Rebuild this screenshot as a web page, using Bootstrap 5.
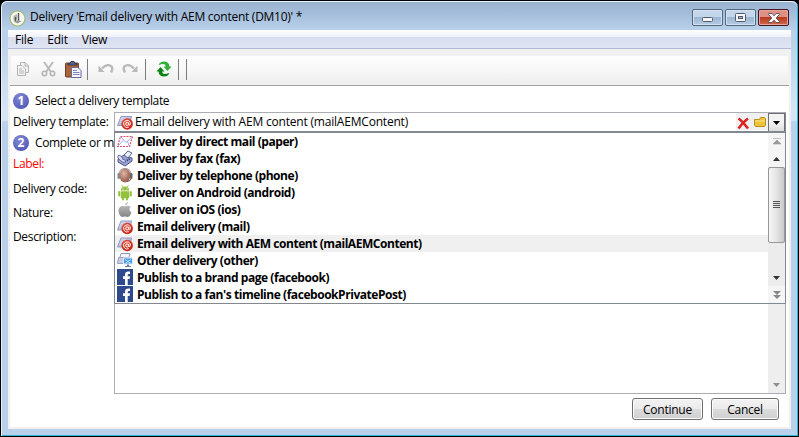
<!DOCTYPE html>
<html lang="en">
<head>
<meta charset="utf-8">
<title>Delivery</title>
<link href="https://cdn.jsdelivr.net/npm/bootstrap@5.3.0/dist/css/bootstrap.min.css" rel="stylesheet">
<style>
html,body{height:100%;margin:0;overflow:hidden;background:#000}
body{font:12px/16px "Open Sans","Noto Sans",sans-serif;color:#000;letter-spacing:-.34px}
svg{display:block;flex:none}
.win{width:799px;height:437px;background:linear-gradient(#b9d1ea 36px,#d5e5f6 110px,#d5e5f6 119px,#b9d1ea 121px);border:1px solid #000;border-radius:7px 7px 0 0;box-shadow:inset 1px 1px 0 #e6f1fb,inset -1px -1px 0 #2cb4d6;padding:0 7px 7px}
.titlebar{height:29px;margin:0 -6px;padding:0 8px 0 7px;background:linear-gradient(#99b3d0,#a5bedb 45%,#b9d1ea);border-radius:6px 6px 0 0;border-top:1px solid #e6f1fb}
.wintitle{letter-spacing:-.26px;padding-top:2px;margin-left:4px}
.captions{gap:2px;padding-top:3px}
.caption{width:31px;height:17px;border:1px solid #53687f;border-radius:2px;box-shadow:inset 0 0 0 1px #d2e2f2;background:linear-gradient(#c3d6ea 48%,#9bb6d2 50%,#b4cde6)}
.caption.shut{border-color:#431422;box-shadow:inset 0 0 0 1px #e5a79d;background:linear-gradient(#dd9184 48%,#b93a20 50%,#d0694c)}
.menus{height:19px;background:linear-gradient(#fff,#eef1f8 38%,#d8deef 40%,#dfe4f3);border-bottom:1px solid #b3bbd4;padding:2px 0 0 7px;gap:14px;letter-spacing:-.2px}
.client{height:380px;background:#f0f0f0;padding:7px 2px 2px}
.tools{height:26px;margin:0 1px;background:linear-gradient(#fdfdfd,#f8f8f8 45%,#efefef)}
.rule{width:1px;height:21px;background:#7d7d7d}
.pane{height:342px;margin-top:3px;background:#fff;border-top:1px solid #a0a0a0}
.stepnum{width:16px;height:16px;border-radius:50%;color:#fff;font-weight:700;line-height:16px;letter-spacing:0;background:radial-gradient(circle at 40% 30%,#8289d4,#5a62bd 65%,#434aa5)}
.labels{width:104px;padding-left:3px;overflow:hidden;white-space:nowrap}
.field{height:24px}
.combo{width:672px;height:20px;border:1px solid #abadb3;border-right-color:#828790;border-bottom:0}
.chosen{letter-spacing:-.2px;margin-left:2px;padding-top:1px}
.tool{width:15px;height:17px;background:#f0f0f0}
.drop{width:17px;height:19px;border:1px solid #707070;background:linear-gradient(#f3f3f3 50%,#dcdcdc)}
.memo{width:672px;height:262px;border:1px solid #abadb3;background:#fff}
.memobar{width:17px;height:260px;background:#eee;padding-bottom:6px}
.popup{left:0;top:-1px;width:672px;height:173px;border:1px solid #828790;border-top-width:2px;background:#fff}
.item{height:17px;line-height:17px;padding-left:2px;gap:4px;font-weight:700;white-space:nowrap;letter-spacing:-.45px}
.item.cur{background:#f0f0f0}
.bar{width:17px;background:#ececec}
.pgbtn{height:17px;background:#f5f5f5}
.thumb{height:76px;border:1px solid #979797;border-radius:2px;background:linear-gradient(90deg,#f6f6f6,#e4e4e4 50%,#c9c9c9)}
.push{height:22px;border:1px solid #707070;border-radius:3px;box-shadow:inset 0 0 0 1px #fcfcfc;background:linear-gradient(#f3f3f3,#ebebeb 48%,#dcdcdc 50%,#cfcfcf);line-height:19px;padding:0;letter-spacing:-.25px}
</style>
<script src="https://cdn.jsdelivr.net/npm/bootstrap@5.3.0/dist/js/bootstrap.bundle.min.js"></script>
</head>
<body>
<svg width="0" height="0" class="position-absolute">
<defs>
<linearGradient id="env" x2="1" y2="1"><stop stop-color="#eef0fb"/><stop offset="1" stop-color="#8d92bd"/></linearGradient>
<radialGradient id="red" cx=".4" cy=".35"><stop stop-color="#ee6a54"/><stop offset="1" stop-color="#cf2616"/></radialGradient>
<symbol id="mail" viewBox="0 0 16 16"><path d="M4 2.500h10.500l-2 9H.5z" fill="url(#env)" stroke="#9297bb"/><path d="M4 3l5 4.500L14 3" fill="none" stroke="#b9bddb" stroke-width=".8"/><circle cx="10.200" cy="10" r="5.700" fill="url(#red)"/><circle cx="10.200" cy="10" r="1.500" fill="none" stroke="#fff"/><path d="M11.800 8.300v2.300q.3 1 1.200.5.900-1.200.3-2.900a3.600 3.600 0 1 0-1.400 4.900" fill="none" stroke="#fff" stroke-width=".9"/></symbol>
<symbol id="fb" viewBox="0 0 16 16"><path d="M0 0h16v16H0z" fill="#2f4a8c"/><path d="M8 16v-6H6V7.200h2V5.500Q8 2.500 11.500 2.500H13V5h-1.300q-1 0-1 1v1.200H13l-.4 2.800h-1.900v6z" fill="#fff"/></symbol>
</defs></svg>
<div class="win">
 <div class="titlebar d-flex align-items-center">
  <svg width="17" height="17" viewBox="0 0 17 17" class="mt-1"><circle cx="8.500" cy="8.500" r="7.500" fill="#f6f7f3" stroke="#a3bb6d" stroke-width="1.200"/><path d="M8 4L4.500 6v5L8 9.500z" fill="#b2b2b2"/><path d="M9.500 3v8M6.500 7v4" stroke="#555" stroke-width="1.400"/><path d="M4.500 11.500l4 2 4-2.200-3-1z" fill="#999"/></svg>
  <span class="wintitle">Delivery 'Email delivery with AEM content (DM10)' *</span>
  <div class="captions d-flex ms-auto">
   <div class="caption d-flex align-items-center justify-content-center"><svg width="11" height="5" class="mt-1"><rect x=".5" y=".5" width="10" height="4" rx="1" fill="#f6f6f6" stroke="#525a6b"/></svg></div>
   <div class="caption d-flex align-items-center justify-content-center"><svg width="11" height="9"><rect x=".5" y=".5" width="10" height="8" rx="1" fill="#f6f6f6" stroke="#525a6b"/><rect x="3.500" y="3.500" width="4" height="2" fill="#a5bcd6" stroke="#525a6b"/></svg></div>
   <div class="caption shut d-flex align-items-center justify-content-center"><svg width="12" height="10" viewBox="0 0 12 10"><path d="M.6.500h3.300L6 2.800 8.100.500h3.300v1L8.200 5l3.200 3.500v1H8.100L6 7.200 3.900 9.500H.6v-1L3.800 5 .6 1.500z" fill="#fff" stroke="#584a58" stroke-width=".9"/></svg></div>
  </div>
 </div>
 <div class="menus d-flex"><span>File</span><span>Edit</span><span>View</span></div>
 <div class="client">
  <div class="tools d-flex align-items-center">
   <svg width="14" height="16" viewBox="0 0 14 16" style="margin-left:5px"><path d="M4.500 1.500H9L12.500 5v6.500h-8z" fill="#f4f4f4" stroke="#b4b4b4"/><path d="M1.500 4.500H6L9.500 8v6.500h-8z" fill="#f4f4f4" stroke="#b4b4b4"/><path d="M3 8h3m-3 2h5m-5 2h5M9 1.500V5h3.500" fill="none" stroke="#b4b4b4"/></svg>
   <svg width="15" height="16" viewBox="0 0 15 16" style="margin-left:11px"><path d="M3 1l7 10M12 1L5 11" stroke="#b9b9b9" stroke-width="2"/><circle cx="3.500" cy="12.500" r="2.200" fill="none" stroke="#b4b4b4" stroke-width="1.500"/><circle cx="11.500" cy="12.500" r="2.200" fill="none" stroke="#b4b4b4" stroke-width="1.500"/></svg>
   <svg width="17" height="17" viewBox="0 0 17 17" style="margin-left:9px"><rect x=".5" y="2" width="13" height="14" rx="1" fill="#a9643c" stroke="#6f3c22"/><path d="M3 4V2.500h2L6 .5h3l1 2h2V4z" fill="#596487" stroke="#343b57"/><path d="M6.500 6.500H13l3 3v7H6.500z" fill="#f4f6ff" stroke="#676c9c"/><path d="M8 9.500h4m-4 2h6.500m-6.500 2h6.500" stroke="#8188b7"/></svg>
   <div class="rule" style="margin-left:5px"></div>
   <svg width="16" height="12" viewBox="0 0 16 12" style="margin-left:10px"><path d="M4 5.500Q8 1 12 2.500t1 7" fill="none" stroke="#b9b9b9" stroke-width="2.400"/><path d="M.5 2.500V9h6z" fill="#b9b9b9"/></svg>
   <svg width="16" height="12" viewBox="0 0 16 12" style="margin-left:8px"><path d="M12 5.500Q8 1 4 2.500t-1 7" fill="none" stroke="#b9b9b9" stroke-width="2.400"/><path d="M15.500 2.500V9h-6z" fill="#b9b9b9"/></svg>
   <div class="rule" style="margin-left:7px"></div>
   <svg width="16" height="16" viewBox="0 0 16 16" style="margin-left:10px"><path d="M2.500 4Q4 .5 8 .5q5 0 5.500 5h2l-4 4.500-4-4.500H10Q9.500 3 7.500 3T2.500 4z" fill="#2fb037"/><path d="M13.500 12q-1.500 3.500-5.500 3.500-5 0-5.500-5h-2l4-4.500 4 4.500H6q.5 2.500 2.500 2.500t5-1z" fill="#0c8416"/></svg>
   <div class="rule" style="margin-left:6px"></div><div class="rule" style="margin-left:7px"></div>
  </div>
  <div class="pane">
   <div class="d-flex align-items-center" style="height:26px;padding:4px 0 0 3px"><span class="stepnum text-center">1</span><span style="margin-left:6px">Select a delivery template</span></div>
   <div class="d-flex">
    <div class="labels" style="padding-top:2px">Delivery template:</div>
    <div class="combo d-flex"><svg width="16" height="16" style="margin:1px 0 0 2px"><use href="#mail"/></svg><span class="chosen">Email delivery with AEM content (mailAEMContent)</span>
     <div class="tool ms-auto d-flex align-items-center justify-content-center"><svg width="13" height="13" viewBox="0 0 13 13" class="mt-1"><path d="M1.500 1.500Q5 4 11 11.500M11 1.500Q6 5 1.500 11.500" fill="none" stroke="#dc2323" stroke-width="2.600"/></svg></div>
     <div class="tool d-flex align-items-center justify-content-center" style="width:17px"><svg width="12" height="10" viewBox="0 0 12 10"><path d="M.5 2.500h5l1-2h4l1 1v7l-1 1h-9l-1-1z" fill="#eec23a" stroke="#b8901b"/><path d="M1 4h10" stroke="#fae994"/></svg></div>
     <div class="drop d-flex align-items-center justify-content-center"><svg width="7" height="4"><path d="M0 0h7L3.500 4z"/></svg></div>
    </div>
   </div>
   <div class="d-flex">
    <div class="labels">
     <div class="d-flex align-items-center" style="height:22px;margin-bottom:2px"><span class="stepnum text-center">2</span><span style="margin-left:6px">Complete or m</span></div>
     <div style="height:25px;color:#f00">Label:</div><div class="field">Delivery code:</div><div class="field">Nature:</div><div class="field">Description:</div>
    </div>
    <div class="position-relative">
     <div class="memo d-flex justify-content-end"><div class="memobar d-flex flex-column justify-content-end align-items-center"><svg width="7" height="4"><path d="M0 0h7L3.500 4z" fill="#8c8c8c"/></svg></div></div>
     <div class="popup position-absolute d-flex">
      <div class="flex-grow-1">
       <div class="item d-flex"><svg width="16" height="17" viewBox="0 0 16 17"><path d="M3.500 3.500h12l-3 10H.5z" fill="#fff" stroke="#df4c72" stroke-width="1.200" stroke-dasharray="2 1"/><path d="M4 4l5 5.500L15 4M1 13l5.500-6M12 13l-1.500-5" fill="none" stroke="#a5acdf"/></svg><span>Deliver by direct mail (paper)</span></div>
       <div class="item d-flex"><svg width="16" height="17" viewBox="0 0 16 17"><path d="M1 9l6-4 8 3v3l-7 5-7-4z" fill="#9aa3d6" stroke="#4c5584"/><path d="M7 5l4-4 4 2-4 5z" fill="#edf0ff" stroke="#59628f"/><path d="M1 8q-1-2 1-3l3 2q0 3 3 3l1 2q-3 1-5-1t-3-3z" fill="#d5dbfa" stroke="#4c5584" stroke-width=".8"/><path d="M10 10.500l3-2" stroke="#293159" stroke-dasharray="1 1" stroke-width="2"/></svg><span>Deliver by fax (fax)</span></div>
       <div class="item d-flex"><svg width="16" height="17" viewBox="0 0 16 17"><defs><radialGradient id="face" cx=".4" cy=".35"><stop stop-color="#e0b7a8"/><stop offset="1" stop-color="#a56c5b"/></radialGradient></defs><ellipse cx="8" cy="8.500" rx="5.500" ry="7" fill="url(#face)"/><path d="M2 8Q2 1.500 8 1.500T14 8" fill="none" stroke="#a09595"/><rect x=".5" y="6" width="2.500" height="6" rx="1.200" fill="#888"/><rect x="13" y="6" width="2.500" height="6" rx="1.200" fill="#666"/><path d="M14 12q-1 2.500-4 2.500" fill="none" stroke="#555"/></svg><span>Deliver by telephone (phone)</span></div>
       <div class="item d-flex"><svg width="16" height="17" viewBox="0 0 16 17"><g fill="#94c13d"><path d="M3.700 6.500Q4 2.500 8 2.500t4.300 4zM3.700 7.200h8.600v6q0 1-1 1H4.700q-1 0-1-1z"/><rect x="1.200" y="7" width="2" height="5.500" rx="1"/><rect x="12.800" y="7" width="2" height="5.500" rx="1"/><rect x="5" y="12" width="2" height="4.500" rx="1"/><rect x="9" y="12" width="2" height="4.500" rx="1"/></g><path d="M4.500 1l1.300 2M11.500 1l-1.300 2" stroke="#94c13d" stroke-width=".7"/><path d="M5.500 4.800h1m3 0h1" stroke="#fff"/></svg><span>Deliver on Android (android)</span></div>
       <div class="item d-flex"><svg width="16" height="17" viewBox="0 0 16 17"><defs><linearGradient id="ap" x2="0" y2="1"><stop stop-color="#c6c6c6"/><stop offset="1" stop-color="#858585"/></linearGradient></defs><path d="M8.200 4.500Q8 1.500 10.800 1q.2 2.800-2.600 3.500zM8 5.300Q11 4 13.800 6q-3 2.500.7 5.500-1.500 4-3.500 4.500-1.500-.6-3-.6t-2.700.6Q1.800 15 1.400 9.800 2 3.500 8 5.300z" fill="url(#ap)"/></svg><span>Deliver on iOS (ios)</span></div>
       <div class="item d-flex"><svg width="16" height="17"><use href="#mail"/></svg><span>Email delivery (mail)</span></div>
       <div class="item cur d-flex"><svg width="16" height="17"><use href="#mail"/></svg><span>Email delivery with AEM content (mailAEMContent)</span></div>
       <div class="item d-flex"><svg width="16" height="17" viewBox="0 0 16 17"><path d="M4 1.500h9l-2 7H2z" fill="#f5f6fc" stroke="#8f95b5"/><path d="M1.500 5.500h9l-1.500 6H.5z" fill="#c7cbe3" stroke="#9ba0c0"/><rect x="6.500" y="6" width="9" height="6" fill="#499be9" stroke="#dcecff"/><path d="M8 7.500l6 4M14 7.500l-6 4" stroke="#b8e0ff"/><path d="M10 12.500h2V14h2v1H8v-1h2z" fill="#687da4"/></svg><span>Other delivery (other)</span></div>
       <div class="item d-flex"><svg width="16" height="16"><use href="#fb"/></svg><span>Publish to a brand page (facebook)</span></div>
       <div class="item d-flex"><svg width="16" height="16"><use href="#fb"/></svg><span>Publish to a fan's timeline (facebookPrivatePost)</span></div>
      </div>
      <div class="bar">
       <div class="pgbtn d-flex align-items-center justify-content-center"><svg width="8" height="7"><path d="M0 .5h8M4 2L8 6H0z" fill="#9a9a9a" stroke="#9a9a9a" stroke-width=".6"/></svg></div>
       <div class="pgbtn d-flex align-items-center justify-content-center"><svg width="7" height="4"><path d="M0 4h7L3.500 0z" fill="#333"/></svg></div>
       <div class="thumb d-flex align-items-center justify-content-center"><svg width="7" height="9"><path d="M0 .5h7M0 2.500h7M0 4.500h7M0 6.500h7" stroke="#555"/></svg></div>
       <div class="d-flex align-items-end justify-content-center" style="height:43px;padding-bottom:6px"><svg width="7" height="4"><path d="M0 0h7L3.500 4z" fill="#333"/></svg></div>
       <div class="pgbtn d-flex align-items-center justify-content-center"><svg width="8" height="8"><path d="M0 1h8M0 0h8L4 4zM0 4h8L4 8z" fill="#888"/></svg></div>
      </div>
     </div>
    </div>
   </div>
   <div class="d-flex justify-content-end" style="gap:8px;padding:4px 10px 0 0"><button class="push" style="width:71px">Continue</button><button class="push" style="width:68px">Cancel</button></div>
  </div>
 </div>
</div>
</body>
</html>
